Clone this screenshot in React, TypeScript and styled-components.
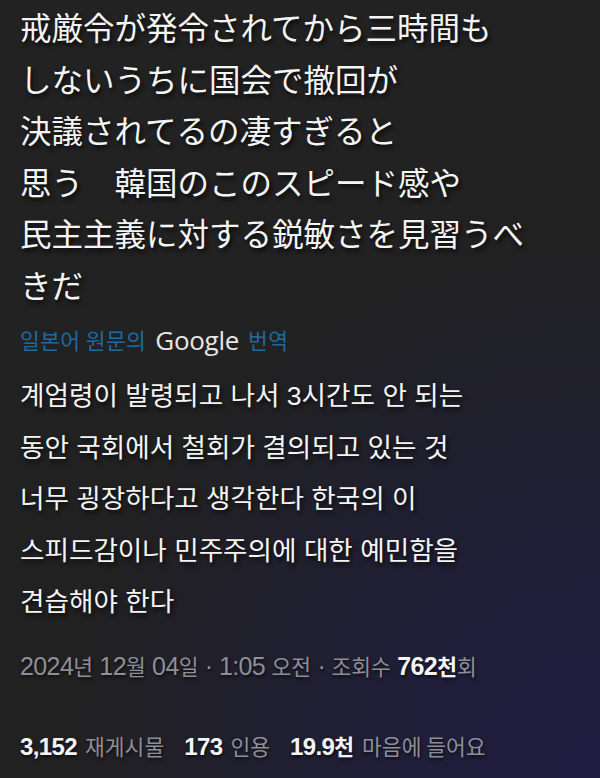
import React from "react";
import styled, { createGlobalStyle } from "styled-components";

const Global = createGlobalStyle`
  html, body { margin: 0; padding: 0; background: #222; }
  #root { width: 600px; height: 778px; }
`;

const Page = styled.div`
  width: 600px;
  height: 778px;
  box-sizing: border-box;
  padding: 1px 20px 0 20px;
  overflow: hidden;
  background:
    radial-gradient(ellipse 90% 70% at 100% 100%, #1f1c40 0%, #201e38 40%, rgba(34,34,34,0) 100%),
    linear-gradient(180deg, #222222 0%, #212121 100%);
  display: flex;
  flex-direction: column;
  color: #fff;
  font-family: "Noto Sans CJK KR", "Noto Sans CJK JP", sans-serif;
`;

const Body = styled.div<{ $lang: "ja" | "ko"; $size: number }>`
  font-family: ${(p) => (p.$lang === "ja" ? '"Noto Sans CJK JP"' : '"Liberation Sans", "Noto Sans CJK KR"')}, sans-serif;
  font-size: ${(p) => p.$size}px;
  line-height: 51.5px;
  color: #f4f4f4;
  text-shadow: 2px 3px 4px rgba(0, 0, 0, 0.75);
  white-space: pre;
`;

const TranslateLabel = styled.div`
  margin-top: 15px;
  font-size: 21.5px;
  line-height: 30px;
  color: #1d6aa0;
  display: flex;
  align-items: center;
  gap: 9px;
  margin-bottom: 16px;
  letter-spacing: 0.4px;
`;

const GoogleWord = styled.span`
  font-family: "Open Sans", "Roboto", sans-serif;
  font-size: 26px;
  line-height: 30px;
  color: #e6e6e6;
  font-weight: 500;
  letter-spacing: -0.3px;
`;

const MetaRow = styled.div<{ $top: number }>`
  margin-top: ${(p) => p.$top}px;
  font-family: "Liberation Sans", "Noto Sans CJK KR", sans-serif;
  font-size: 25px;
  line-height: 30px;
  color: #8e8e96;
  letter-spacing: -0.6px;
  white-space: pre;
  text-shadow: 1px 2px 3px rgba(0, 0, 0, 0.6);
`;

const Han = styled.span`
  font-family: "Noto Sans CJK KR", sans-serif;
  font-size: 21.5px;
  letter-spacing: 0;
`;

const Strong = styled.b`
  color: #f4f4f4;
  font-weight: 700;
`;

const Stats = styled(MetaRow)`
  display: flex;
  gap: 20px;
  font-size: 24px;
`;

const Stat = styled.span`
  display: inline-flex;
  align-items: baseline;
  gap: 8px;
`;

const ja = `戒厳令が発令されてから三時間も
しないうちに国会で撤回が
決議されてるの凄すぎると
思う　韓国のこのスピード感や
民主主義に対する鋭敏さを見習うべ
きだ`;

const ko = `계엄령이 발령되고 나서 3시간도 안 되는
동안 국회에서 철회가 결의되고 있는 것
너무 굉장하다고 생각한다 한국의 이
스피드감이나 민주주의에 대한 예민함을
견습해야 한다`;

export default function App() {
  return (
    <>
      <Global />
      <Page>
        <Body $lang="ja" $size={31.5}>{ja}</Body>
        <TranslateLabel>
          <span>일본어 원문의</span>
          <GoogleWord>Google</GoogleWord>
          <span>번역</span>
        </TranslateLabel>
        <Body $lang="ko" $size={26.6}>{ko}</Body>
        <MetaRow $top={22}>
          2024<Han>년</Han> 12<Han>월</Han> 04<Han>일</Han> · 1:05 <Han>오전</Han> · <Han>조회수</Han>{" "}
          <Strong>762<Han>천</Han></Strong><Han>회</Han>
        </MetaRow>
        <Stats $top={50}>
          <Stat><Strong>3,152</Strong><Han>재게시물</Han></Stat>
          <Stat><Strong>173</Strong><Han>인용</Han></Stat>
          <Stat><Strong>19.9<Han>천</Han></Strong><Han>마음에 들어요</Han></Stat>
        </Stats>
      </Page>
    </>
  );
}
